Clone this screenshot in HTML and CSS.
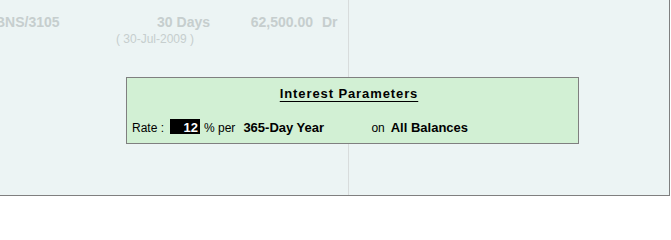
FILE: index.html
```html
<!DOCTYPE html>
<html>
<head>
<meta charset="utf-8">
<link rel="stylesheet" href="styles.css">
</head>
<body>
<div class="panel">
  <div class="col-left">
    <div class="row-main">
      <span class="cell ref"><span class="ref-text">BNS/3105</span></span>
      <span class="cell days">30 Days</span>
      <span class="cell amt">62,500.00</span>
      <span class="drcr">Dr</span>
    </div>
    <div class="row-date">( 30-Jul-2009 )</div>
  </div>
  <div class="col-right"></div>

  <div class="dialog">
    <div class="dlg-title"><span class="title-text">Interest Parameters</span></div>
    <div class="dlg-row">
      <span class="lbl">Rate :</span>
      <span class="field">12</span>
      <span class="lbl pct">% per</span>
      <span class="val year">365-Day Year</span>
      <span class="lbl on">on</span>
      <span class="val bal">All Balances</span>
    </div>
  </div>
</div>
</body>
</html>
```

FILE: styles.css
```css
html, body {
  margin: 0;
  padding: 0;
  background: #ffffff;
}
body {
  font-family: "Liberation Sans", Arial, sans-serif;
  width: 671px;
  height: 201px;
  overflow: hidden;
}
.panel {
  position: relative;
  width: 669px;
  height: 195px;
  background: #ecf4f4;
  border-right: 1px solid #7f7f7f;
  border-bottom: 1px solid #7f7f7f;
  display: flex;
}
.col-left {
  width: 348px;
  border-right: 1px solid #d8dcdc;
  overflow: hidden;
}
.col-right {
  flex: 1;
}
.row-main {
  display: flex;
  padding-top: 14px;
  font-weight: bold;
  font-size: 14px;
  line-height: 16px;
  color: #c6cece;
  white-space: nowrap;
}
.cell {
  display: block;
}
.ref {
  width: 100px;
  overflow: hidden;
}
.ref-text {
  display: block;
  margin-left: -5px;
}
.days {
  width: 110px;
  text-align: right;
}
.amt {
  width: 103px;
  text-align: right;
}
.drcr {
  margin-left: 9px;
}
.row-date {
  margin-top: 2px;
  margin-left: 116px;
  font-size: 12px;
  line-height: 14px;
  color: #c6cece;
  white-space: nowrap;
}
.dialog {
  position: absolute;
  left: 126px;
  top: 77px;
  width: 451px;
  height: 65px;
  background: #d2f0d4;
  border: 1px solid #7f7f7f;
}
.dlg-title {
  padding-top: 8px;
  text-align: center;
  font-weight: bold;
  font-size: 13px;
  line-height: 15px;
  color: #000;
}
.title-text {
  letter-spacing: 0.9px;
  text-decoration: underline;
  text-underline-offset: 3px;
  margin-left: -7px;
}
.dlg-row {
  display: flex;
  align-items: baseline;
  margin-top: 18px;
  padding-left: 5px;
  white-space: nowrap;
  color: #000;
}
.lbl {
  font-size: 12px;
  line-height: 15px;
}
.val {
  font-weight: bold;
  font-size: 13px;
  line-height: 15px;
}
.field {
  margin-left: 6px;
  width: 26px;
  height: 13px;
  padding: 2px 2px 0 2px;
  background: #000;
  color: #fff;
  font-weight: bold;
  font-size: 13px;
  line-height: 13px;
  text-align: right;
}
.pct {
  margin-left: 4px;
}
.year {
  margin-left: 8px;
  width: 128px;
}
.on {
  margin-left: 0;
}
.bal {
  margin-left: 6px;
}
```
